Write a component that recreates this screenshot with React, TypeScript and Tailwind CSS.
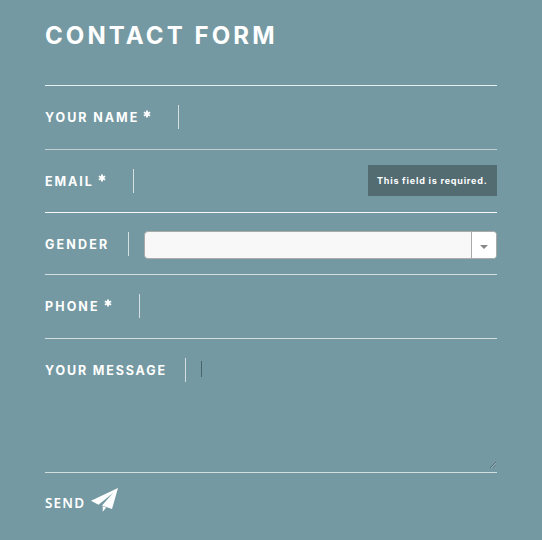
import type { ReactNode } from "react";

type RowProps = {
  label: string;
  required?: boolean;
  row: string;
  labelWidth: string;
  tracking: string;
  children?: ReactNode;
};

function Row({ label, required, row, labelWidth, tracking, children }: RowProps) {
  return (
    <div className={`flex items-start border-t ${row}`}>
      <label className={`flex h-6 shrink-0 items-center whitespace-pre border-r border-[#d3dfe1] pt-px text-[12.5px] font-bold leading-6 ${labelWidth}`}>
        <span className={tracking}>{label}</span>
        {required && (
          <svg className="-mt-[7px] ml-1 h-2 w-2" viewBox="0 0 8 8" stroke="white" strokeWidth="1.9" aria-label="required">
            <path d="M4 .4v7.2M.9 2.2l6.2 3.6M.9 5.8l6.2-3.6" />
          </svg>
        )}
      </label>
      {children}
    </div>
  );
}

export default function App() {
  return (
    <main className="h-[540px] w-[542px] overflow-hidden bg-[#7499a2] pl-[45px] pr-[45px] font-['Inter',sans-serif] text-white">
      <h1 className="h-[85px] whitespace-nowrap pt-[20px] text-[24px] font-bold leading-8 tracking-[3.1px]">CONTACT FORM</h1>
      <form>
        <Row label="YOUR NAME" required row="h-16 border-[#e2f0f2] pt-[19px]" labelWidth="w-[134px]" tracking="tracking-[1.95px]" />
        <Row label="EMAIL" required row="h-[63px] border-[#c3d0d3] pt-[19px]" labelWidth="w-[89px]" tracking="tracking-[1.9px]">
          <div className="-mt-[4px] ml-auto flex h-[31px] w-[129px] items-center bg-[#526c72] pl-[9px] text-[9px] font-bold">
            <span className="whitespace-nowrap tracking-[0.78px]">This field is required.</span>
          </div>
        </Row>
        <Row label="GENDER" row="h-[62px] border-[#f5f9fa] pt-[19px]" labelWidth="w-[84px]" tracking="tracking-[2.2px]">
          <div className="-mt-px ml-[15px] flex h-[28px] flex-1 overflow-hidden rounded-[4px] border border-[#aaa] bg-[#f8f8f8]">
            <div className="flex-1" />
            <div className="flex w-[25px] items-center justify-center border-l border-[#aaa] bg-white">
              <svg className="mt-[3px] h-1 w-2" viewBox="0 0 8 4"><path d="M0 0h8L4 4z" fill="#888" /></svg>
            </div>
          </div>
        </Row>
        <Row label="PHONE" required row="h-16 border-[#d3dee0] pt-[19px]" labelWidth="w-[95px]" tracking="tracking-[2.1px]" />
        <Row label="YOUR MESSAGE" row="h-[134px] border-[#d3dee0] pt-[19px]" labelWidth="w-[141px]" tracking="tracking-[1.85px]">
          <div className="ml-[15px] mt-[3px] h-4 w-px bg-[#48646b]" />
          <svg className="ml-auto mt-[103px] h-2 w-2" viewBox="0 0 8 8" fill="none">
            <path d="M1 7l6-6M4.5 7L7 4.5" stroke="#526970" />
            <path d="M2 7l5-5M5.5 7L7 5.5" stroke="#b6c8cc" strokeWidth=".6" />
          </svg>
        </Row>
        <div className="flex border-t border-[#d3dee0] pt-[14px]">
          <span className="mt-[4px] w-[46px] font-['Noto_Sans',sans-serif] text-[13.5px] font-semibold leading-6 tracking-[1.2px]">SEND</span>
          <svg className="h-[26px] w-[27px]" viewBox="0 0 27 26" fill="white">
            <path d="M27 1 0 13.8l7.5 4L22 6 11 18.6l10 3.4zM11.7 19.3v5.5l3.5-4.3z" />
          </svg>
        </div>
      </form>
    </main>
  );
}
